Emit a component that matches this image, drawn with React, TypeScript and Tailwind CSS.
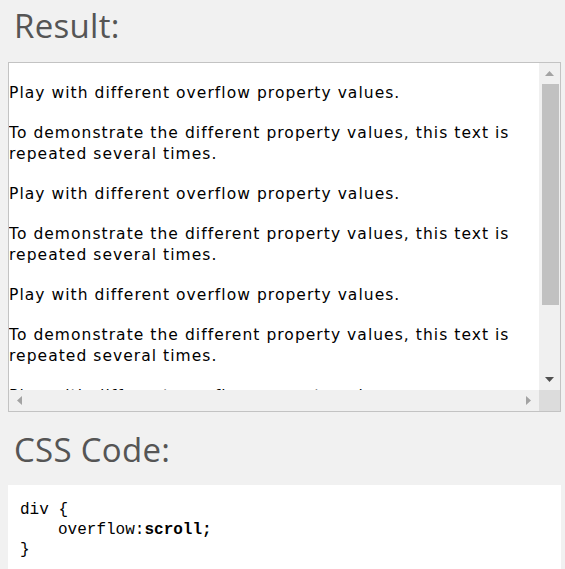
import React from 'react';

const paras = [
  'Play with different overflow property values.',
  'To demonstrate the different property values, this text is repeated several times.',
];

function Arrow({ dir, color }: { dir: 'up' | 'down' | 'left' | 'right'; color: string }) {
  const pts = {
    up: '0,5 4.5,0 9,5',
    down: '0,0 9,0 4.5,5',
    left: '5,0 5,9 0,4.5',
    right: '0,0 5,4.5 0,9',
  }[dir];
  const vertical = dir === 'up' || dir === 'down';
  return (
    <svg width={vertical ? 9 : 5} height={vertical ? 5 : 9} viewBox={vertical ? '0 0 9 5' : '0 0 5 9'}>
      <polygon points={pts} fill={color} />
    </svg>
  );
}

export default function App() {
  const items = [...paras, ...paras, ...paras, ...paras];
  return (
    <div className="min-h-screen bg-[#f1f1f1] px-[8px] pt-[3px]">
      <h2 className="pl-[6px] text-[33px] leading-[45px] tracking-[0.3px] text-[#555] font-['Open_Sans',sans-serif]">Result:</h2>

      {/* fake scroll box */}
      <div className="mt-[14px] w-[553px] h-[350px] border border-[#c3c3c3] bg-white flex flex-col">
        <div className="flex h-[327px]">
          <div className="flex-1 overflow-hidden pt-[20px] flex flex-col gap-[19px] text-[15.5px] leading-[21px] tracking-[1.05px] text-black font-['DejaVu_Sans',sans-serif]">
            {items.map((t, i) => (
              <p key={i} className="shrink-0">{t}</p>
            ))}
          </div>
          <div className="w-[21px] bg-[#f0f0f0] flex flex-col">
            <div className="h-[21px] flex items-center justify-center">
              <Arrow dir="up" color="#a3a3a3" />
            </div>
            <div className="ml-[3px] w-[17px] h-[221px] bg-[#c1c1c1]" />
            <div className="flex-1" />
            <div className="h-[21px] flex items-center justify-center">
              <Arrow dir="down" color="#505050" />
            </div>
          </div>
        </div>
        <div className="flex h-[21px] bg-[#f0f0f0]">
          <div className="w-[21px] flex items-center justify-center">
            <Arrow dir="left" color="#a3a3a3" />
          </div>
          <div className="flex-1" />
          <div className="w-[21px] flex items-center justify-center">
            <Arrow dir="right" color="#a3a3a3" />
          </div>
          <div className="w-[21px] bg-[#dcdcdc]" />
        </div>
      </div>

      <h2 className="mt-[15px] pl-[6px] text-[33px] leading-[45px] tracking-[0.3px] text-[#555] font-['Open_Sans',sans-serif]">CSS Code:</h2>

      <div className="mt-[13px] w-[553px] bg-white px-[12px] pt-[15px] pb-[15px] text-[16px] leading-[20px] text-black font-['Liberation_Mono',monospace]">
        <div>div {'{'}</div>
        <div className="pl-[38px]">
          overflow:<span className="font-bold">scroll;</span>
        </div>
        <div>{'}'}</div>
      </div>
    </div>
  );
}
